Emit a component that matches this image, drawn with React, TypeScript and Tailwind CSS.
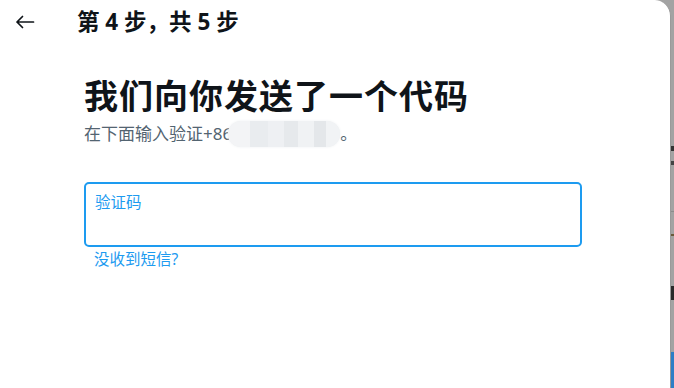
import React from "react";

const font = {
  fontFamily: '"Noto Sans", "Noto Sans CJK SC", sans-serif',
};

function BackArrow() {
  return (
    <svg width="20" height="14" viewBox="0 0 20 14" fill="none">
      <path
        d="M18.5 7H2M7.5 1.5L2 7l5.5 5.5"
        stroke="#0f1419"
        strokeWidth="1.7"
        strokeLinecap="round"
        strokeLinejoin="round"
      />
    </svg>
  );
}

// the page behind the modal, seen as a thin strip on the right
function BackdropStrip() {
  return (
    <div className="flex w-[3px] flex-col bg-[#a3a3a3] pt-[146px]">
      <div className="h-[5px] bg-[#333]" />
      <div className="h-[10px]" />
      <div className="h-[4px] bg-[#444]" />
      <div className="h-[46px]" />
      <div className="h-[1px] bg-[#8c8c8c]" />
      <div className="h-[22px]" />
      <div className="h-[2px] bg-[#6b5a3a]" />
      <div className="h-[50px]" />
      <div className="h-[14px] bg-[#2a2a2a]" />
      <div className="h-[52px]" />
      <div className="flex-1 bg-[#2f7ec6]" />
    </div>
  );
}

export default function App() {
  return (
    <div className="flex h-[388px] w-[674px] bg-[#a3a3a3]" style={font}>
      <div className="flex flex-1 flex-col rounded-tr-[16px] border-r border-[#9a9a9a] bg-white">
        <div className="flex h-[44px] items-center">
          <div className="flex w-[77px] pl-[15px]">
            <BackArrow />
          </div>
          <h2 className="text-[22.5px] font-bold leading-6 text-[#0f1419]">
            第 4 步，共 5 步
          </h2>
        </div>

        <div className="flex flex-col pl-[84px] pt-[33px]">
          <h1 className="text-[34px] font-bold leading-[38px] tracking-[1px] text-[#0f1419]">
            我们向你发送了一个代码
          </h1>
          <div className="mt-[6px] flex items-center text-[17px] leading-[26px] text-[#536471]">
            <span>在下面输入验证+86</span>
            <span className="-ml-[4px] h-[26px] w-[112px] rounded-full bg-[#eef0f2] shadow-[0_0_3px_#eef0f2]">
              <span className="flex h-full">
                <span className="w-[22px] rounded-l-full bg-[#f3f4f6]" />
                <span className="w-[18px] bg-[#e9ecef]" />
                <span className="w-[16px] bg-[#eef0f3]" />
                <span className="w-[14px] bg-[#e6e9ec]" />
                <span className="w-[16px] bg-[#f0f2f4]" />
                <span className="w-[12px] bg-[#e4e7ea]" />
                <span className="flex-1 rounded-r-full bg-[#f1f3f5]" />
              </span>
            </span>
            <span>。</span>
          </div>

          <div className="mt-[35px] flex h-[65px] w-[498px] flex-col rounded-[5px] border-2 border-[#1d9bf0] px-[9px] pt-[8px]">
            <label className="text-[15.5px] leading-5 text-[#1d9bf0]">
              验证码
            </label>
            <input className="w-full bg-transparent text-[17px] outline-none" />
          </div>
          <a className="mt-[2px] pl-[10px] text-[15.5px] leading-5 text-[#1d9bf0]">
            没收到短信?
          </a>
        </div>
      </div>
      <BackdropStrip />
    </div>
  );
}
